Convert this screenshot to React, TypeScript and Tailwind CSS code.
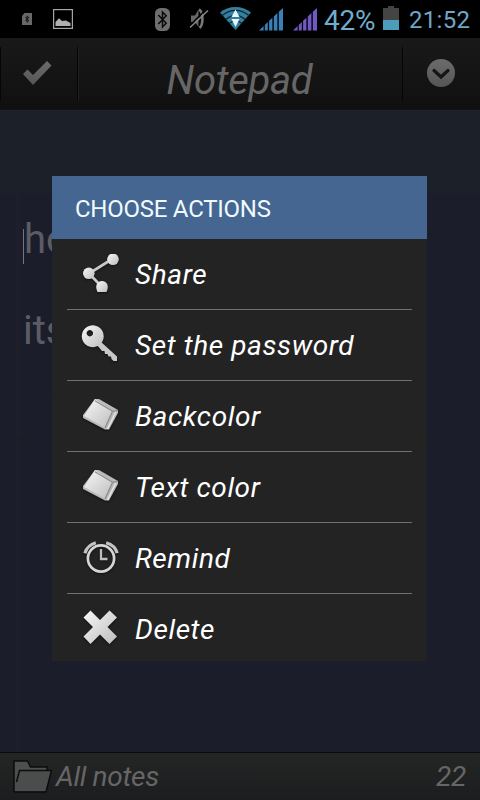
import type { ReactNode } from "react"

const BluetoothCard = () => (
  <svg width="10" height="12" viewBox="0 0 10 12" className="ml-[22px]">
    <path d="M2.5 0H10V12H0V3z" fill="#686868" />
    <path d="M3.4 4L6.8 7.7L5.1 9.3V2.9L6.8 4.5L3.4 8" fill="none" stroke="#111" strokeWidth="1" />
  </svg>
)

const PictureIcon = () => (
  <svg width="20" height="20" viewBox="0 0 20 20" className="ml-[21px]">
    <rect x="0.6" y="0.6" width="18.8" height="18.8" fill="none" stroke="#a6a6a6" strokeWidth="1.2" />
    <path d="M2.5 17V13L6 9.2L9 12L13 11.5L17.5 14V17z" fill="#b0b0b0" />
  </svg>
)

const BluetoothIcon = () => (
  <svg width="15" height="23" viewBox="0 0 15 23" className="ml-[82px]">
    <rect x="0" y="0" width="15" height="23" rx="5.5" fill="#6e6e6e" />
    <path d="M3.3 7L11.2 15.2L7.5 19V4L11.2 7.8L3.3 16" fill="none" stroke="#0a0a0a" strokeWidth="1.5" />
  </svg>
)

const MuteIcon = () => (
  <svg width="20" height="22" viewBox="0 0 20 22" className="ml-[19px]">
    <path d="M2 7.5H6L9.5 1.5V19L6 14H2z" fill="#686868" />
    <path d="M10 1.5C14.5 4 14.5 17 10.5 20" fill="none" stroke="#777" strokeWidth="2.6" />
    <path d="M0 18.5L17 1.5" stroke="#050505" strokeWidth="1.6" />
    <path d="M1 19.5L19 2.5" stroke="#8a8a8a" strokeWidth="1.5" />
  </svg>
)

const WifiIcon = () => (
  <svg width="31" height="24" viewBox="0 0 31 24" className="ml-[11px]">
    <path d="M0 6.5C8 -1 23 -1 31 6.5L15.5 24z" fill="#347f9e" />
    <path d="M2.5 9.3C10 2.6 21 2.6 28.5 9.3M6 13.3C12 8.3 19 8.3 25 13.3M9.5 17.3C13 14 18 14 21.5 17.3" fill="none" stroke="#0b2734" strokeWidth="1.3" />
    <path d="M15.5 3.5L19.5 11H11.5zM11.5 13H19.5L15.5 21z" fill="#e4f5fc" />
  </svg>
)

const SignalIcon = ({ color }: { color: string }) => (
  <svg width="24" height="23" viewBox="0 0 24 23">
    <path d="M0 22.5L4.6 18V22.5zM5.8 17L8.8 14V22.5H5.8zM10.1 12.8L13.4 9.8V22.5H10.1zM14.8 8.5L18.4 5V22.5H14.8zM19.8 3.8L24 0V22.5H19.8z" fill={color} />
  </svg>
)

const BatteryIcon = () => (
  <svg width="16" height="24" viewBox="0 0 16 24" className="ml-2">
    <path d="M0 2H5V0H11V2H16V14H0z" fill="#444" />
    <path d="M0 14H16V24H0z" fill="#4c9dba" />
  </svg>
)

const Defs = () => (
  <svg width="0" height="0" className="absolute">
    <defs>
      <linearGradient id="silver" x1="0" y1="0" x2="1" y2="1">
        <stop offset="0" stopColor="#f8f8f8" />
        <stop offset="1" stopColor="#bdbdbd" />
      </linearGradient>
      <linearGradient id="dim" x1="0" y1="0" x2="0" y2="1">
        <stop offset="0" stopColor="#6c6c6c" />
        <stop offset="1" stopColor="#555" />
      </linearGradient>
    </defs>
  </svg>
)

const Icon = ({ children }: { children: ReactNode }) => (
  <svg width="40" height="40" viewBox="0 0 40 40" className="drop-shadow-[0_1px_1px_#0008]">{children}</svg>
)

const ShareIcon = () => (
  <Icon>
    <path d="M33 4.5L9 19.5L22 33" fill="none" stroke="#c8c8c8" strokeWidth="2.7" />
    <circle cx="33" cy="5.3" r="5.8" fill="url(#silver)" />
    <circle cx="8.8" cy="19.3" r="5.8" fill="url(#silver)" />
    <path d="M17.5 38C14.5 32 17 27 22 27S29.5 32 26.5 38z" fill="url(#silver)" />
  </Icon>
)

const KeyIcon = () => (
  <Icon>
    <path d="M21 17L37 31.5V36H33.5L31.5 34L31 31.5H28.5L27.5 29H25L24.5 26H22L17 20z" fill="#c8c8c8" />
    <path fillRule="evenodd" d="M12.8 0.2A11 11 0 1 1 12.7 0.2zM9.8 5A3.2 3.2 0 1 0 9.9 5z" fill="url(#silver)" />
  </Icon>
)

const BookIcon = () => (
  <Icon>
    <path d="M15 3H19L38 14V17L29 33.5H25L3 22V19z" fill="#b9b9b9" />
    <path d="M15 3L32.5 15L25 31.5L4 20z" fill="url(#silver)" />
    <path d="M15 4.8L32.5 15.3L37.5 14.5M32.5 15.3L25 32" fill="none" stroke="#888" strokeWidth="1.1" />
    <path d="M35.8 16L27.5 33" stroke="#e8e8e8" strokeWidth="1.4" />
  </Icon>
)

const AlarmIcon = () => (
  <Icon>
    <circle cx="21" cy="20.5" r="13.1" fill="none" stroke="#d5d5d5" strokeWidth="2.7" />
    <path d="M21 11V21H27.5" fill="none" stroke="#bcbcbc" strokeWidth="2.3" />
    <path d="M4.8 15.2C6.5 10 10.5 6.2 15.8 4.7M26.2 4.7C31.5 6.2 35.8 10 37.2 15.2" fill="none" stroke="#c4c4c4" strokeWidth="3.2" />
  </Icon>
)

const CrossIcon = () => (
  <Icon>
    <path d="M10.5 2.5L20 12L29.5 2.5L37 9.5L27.5 19L37 28.5L29.5 36L20 26.5L10.5 36L3.5 28.5L13 19L3.5 9.5z" fill="url(#silver)" />
  </Icon>
)

const actions = [
  { label: "Share", icon: <ShareIcon /> },
  { label: "Set the password", icon: <KeyIcon /> },
  { label: "Backcolor", icon: <BookIcon /> },
  { label: "Text color", icon: <BookIcon /> },
  { label: "Remind", icon: <AlarmIcon /> },
  { label: "Delete", icon: <CrossIcon /> },
]

function StatusBar() {
  return (
    <div className="flex h-[38px] items-center bg-black whitespace-nowrap">
      <BluetoothCard />
      <PictureIcon />
      <BluetoothIcon />
      <MuteIcon />
      <div className="-mt-[2px]"><WifiIcon /></div>
      <div className="ml-2 flex gap-[10px]">
        <SignalIcon color="#397fb8" />
        <SignalIcon color="#7159c5" />
      </div>
      <span className="ml-[7px] w-[51px] pt-[3px] text-[28px] leading-none tracking-[-0.2px] text-[#70adcc]">42%</span>
      <div className="-mt-[2px]"><BatteryIcon /></div>
      <span className="ml-[10px] pt-[2px] text-[24px] leading-none tracking-[0.3px] text-[#70a7c7]">21:52</span>
    </div>
  )
}

export default function App() {
  return (
    <div className="relative flex h-[800px] w-[480px] flex-col overflow-hidden bg-[#1c1d2a] font-['Roboto',sans-serif]">
      <Defs />
      <StatusBar />
      <header className="flex h-[72px] items-center bg-linear-to-b from-[#191919] to-[#101010]">
        <div className="flex h-[54px] w-[78px] items-center border-r border-l border-[#050505] pl-[22px]">
          <svg width="30" height="27" viewBox="0 0 30 27" className="mt-[1px]">
            <path d="M0 13L4.5 8.5L10 14L24 0L28.5 4.5L10 24z" fill="url(#dim)" />
          </svg>
        </div>
        <h1 className="flex-1 border-l border-[#202020] pt-[13px] pr-[2px] text-center text-[40px] leading-none tracking-[-0.3px] text-[#666] italic">Notepad</h1>
        <div className="flex h-[54px] w-[78px] items-center border-l border-[#050505] pl-[24px]">
          <svg width="28" height="28" viewBox="0 0 28 28" className="-mt-[2px]">
            <circle cx="14" cy="14" r="14" fill="url(#dim)" />
            <path d="M7 11.5L14 18L21 11.5" fill="none" stroke="#151515" strokeWidth="3.2" strokeLinecap="round" />
          </svg>
        </div>
      </header>
      <main className="flex-1 border-t border-[#20252b] bg-linear-to-r from-[#1c1d2a] from-[14px] via-[#1e1f2b] via-[18px] to-[#1c1d2a] to-[22px]">
        <div className="h-[82px] bg-[#1c2029]" />
        <div className="ml-[23px] text-[40px] leading-[91px] text-[#5c5c64]">
          <div className="flex items-center">
            <span className="mt-[14px] h-[35px] w-px bg-[#777]" />
            <span className="pt-[1px]">hotes</span>
          </div>
          <p>its</p>
        </div>
        <div className="mt-[21px] h-px bg-[#211d29]" />
        <div className="mt-[41px] h-px bg-[#1d1c22]" />
        <div className="mt-[46px] h-px bg-[#201d2b]" />
        <div className="mt-[236px] h-px bg-[#201c26]" />
      </main>
      <footer className="flex h-12 items-center border-t border-[#090909] bg-linear-to-b from-[#242525] to-[#1c1d1e] text-[28px] leading-none tracking-[-0.3px] text-[#666] italic">
        <svg width="40" height="34" viewBox="0 0 40 34" className="ml-[13px]">
          <path d="M1 32V1H14.5L17.5 7H34V11" fill="#4c4f4d" stroke="#0c0c0c" strokeWidth="1.5" />
          <path d="M2 31.5L6.5 10.5H38.5L33 31.5z" fill="#4a4d4b" />
          <path d="M3.5 22L6.5 10.5H38.5L33 32H1" fill="none" stroke="#0c0c0c" strokeWidth="1.5" />
        </svg>
        <span className="ml-[3px] pt-px">All notes</span>
        <span className="mr-[14px] ml-auto pt-px">22</span>
      </footer>

      <section className="absolute top-[176px] left-[52px] h-[485px] w-[375px] bg-[#232323]">
        <h2 className="flex h-[63px] items-center bg-[#456690] pt-[3px] pl-[23px] text-[24px] tracking-[-0.25px] text-[#eefaff]">CHOOSE ACTIONS</h2>
        <ul className="px-[15px]">
          {actions.map(({ label, icon }) => (
            <li key={label} className="flex h-[71px] items-center border-b border-[#707070] pl-[13px] last:h-[69px] last:border-b-0">
              <div className="-mt-[1px]">{icon}</div>
              <span className="ml-[15px] pt-[2px] text-[28px] leading-none tracking-[0.6px] whitespace-nowrap text-white italic">{label}</span>
            </li>
          ))}
        </ul>
      </section>
    </div>
  )
}
